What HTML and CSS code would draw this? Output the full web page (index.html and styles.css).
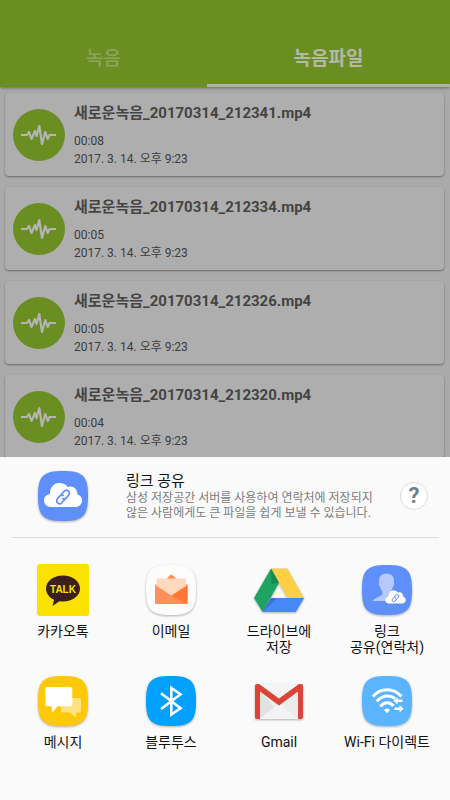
FILE: index.html
```html
<!DOCTYPE html>
<html lang="ko">
<head>
  <meta charset="UTF-8">
  <meta name="viewport" content="width=device-width, initial-scale=1">
  <title>녹음파일</title>
  <link rel="stylesheet" href="styles.css">
</head>
<body>

<!-- shared shapes -->
<svg class="defs" aria-hidden="true">
  <symbol id="wave" viewBox="0 0 52 52">
    <path d="M8 26H14L16 23L18.500 30L22 22L23.500 27L26.300 17L29 35L32.300 23L34.700 30L36.500 26H43" fill="none" stroke="#b4b4b4" stroke-width="2.200" stroke-linejoin="round"/>
  </symbol>
  <symbol id="tile" viewBox="0 0 50 50">
    <path d="M25 0C45 0 50 5 50 25C50 45 45 50 25 50C5 50 0 45 0 25C0 5 5 0 25 0Z"/>
  </symbol>
  <symbol id="cloud" viewBox="0 0 50 50">
    <path d="M13 36C8.500 36 6 33 6 29.500C6 26 8.500 23.500 12 23C12 16 16 12 21 12C25 12 28 13 29.500 16C35 14 39.500 18 39.500 23.500C42 24 44 26.500 44 29.500C44 33.500 41 36 37 36Z" fill="#fff"/>
    <g transform="translate(25 26) rotate(-48)" fill="none" stroke="#5e8ffb" stroke-width="1.700" stroke-linecap="round">
      <path d="M-1 3H-5A3 3 0 0 1 -5 -3H-1.500A3 3 0 0 1 1.300 -1"/>
      <path d="M1 -3H5A3 3 0 0 1 5 3H1.500A3 3 0 0 1 -1.300 1"/>
    </g>
  </symbol>
</svg>

<header class="tabs">
  <button class="tab">녹음</button>
  <button class="tab active">녹음파일</button>
</header>

<main>
  <ul class="records">
    <li class="record">
      <svg class="record-icon"><use href="#wave"/></svg>
      <div>
        <h2>새로운녹음_20170314_212341.mp4</h2>
        <p>00:08</p>
        <p>2017. 3. 14. 오후 9:23</p>
      </div>
    </li>
    <li class="record">
      <svg class="record-icon"><use href="#wave"/></svg>
      <div>
        <h2>새로운녹음_20170314_212334.mp4</h2>
        <p>00:05</p>
        <p>2017. 3. 14. 오후 9:23</p>
      </div>
    </li>
    <li class="record">
      <svg class="record-icon"><use href="#wave"/></svg>
      <div>
        <h2>새로운녹음_20170314_212326.mp4</h2>
        <p>00:05</p>
        <p>2017. 3. 14. 오후 9:23</p>
      </div>
    </li>
    <li class="record">
      <svg class="record-icon"><use href="#wave"/></svg>
      <div>
        <h2>새로운녹음_20170314_212320.mp4</h2>
        <p>00:04</p>
        <p>2017. 3. 14. 오후 9:23</p>
      </div>
    </li>
  </ul>
</main>

<section class="sheet">
  <div class="link-share">
    <svg class="icon shadow" viewBox="0 0 50 50">
      <use href="#tile" fill="#5e8ffb"/>
      <use href="#cloud"/>
    </svg>
    <div class="link-text">
      <h3>링크 공유</h3>
      <p>삼성 저장공간 서버를 사용하여 연락처에 저장되지<br>않은 사람에게도 큰 파일을 쉽게 보낼 수 있습니다.</p>
    </div>
    <button class="help">?</button>
  </div>

  <div class="apps">
    <button class="app">
      <span class="slot">
        <svg class="icon icon-square" viewBox="0 0 52 52">
          <rect width="52" height="52" rx="3" fill="#fae100"/>
          <path d="M26 11.500C35.500 11.500 43 17.200 43 24.600C43 32 35.500 37.500 26 37.500L22.500 37.300L15.500 42L17 35.800C12 33.500 9 29.500 9 24.600C9 17.200 16.500 11.500 26 11.500Z" fill="#3b1e1e"/>
          <text class="talk" x="26" y="28.500" text-anchor="middle">TALK</text>
        </svg>
      </span>
      <span class="app-name">카카오톡</span>
    </button>

    <button class="app">
      <span class="slot">
        <svg class="icon shadow" viewBox="0 0 50 50">
          <use href="#tile" fill="#fcfcfc"/>
          <path d="M20 14.500L24 10.300Q25.300 9 26.600 10.300L31 14.500Z" fill="#ff8a50"/>
          <path d="M9 20L12 18.500H39L41.500 20V38Q41.500 39 40.500 39H10Q9 39 9 38Z" fill="#ff8f5c"/>
          <path d="M41.500 20L25.300 30.500L40.500 39Q41.500 39 41.500 38Z" fill="#ff7733"/>
          <path d="M10.500 14.500Q10.500 13.500 11.500 13.500H39Q40 13.500 40 14.500V21L25.300 30.500L10.500 21Z" fill="#ffd9bd"/>
        </svg>
      </span>
      <span class="app-name">이메일</span>
    </button>

    <button class="app">
      <span class="slot">
        <svg class="icon shadow" viewBox="0 0 50 50">
          <path d="M17 3.500H33.300L50 33H33.700Z" fill="#ffcf48"/>
          <path d="M17 3.500L25 17.800L8.700 47L0 33Z" fill="#1da362"/>
          <path d="M17 33H50L41.800 47H8.700Z" fill="#4688f4"/>
          <path d="M17 3.500L25 17.800L17.500 19Z" fill="#178a52"/>
          <path d="M17 33L8.700 47L23 33Z" fill="#3a70d8"/>
        </svg>
      </span>
      <span class="app-name">드라이브에<br>저장</span>
    </button>

    <button class="app">
      <span class="slot">
        <svg class="icon shadow" viewBox="0 0 50 50">
          <use href="#tile" fill="#5e8ffb"/>
          <path d="M24.500 8.500C30 8.500 32.500 12 32 17.500C32.500 20 31.500 21.500 31 22C30 25 28.500 26 28.500 28C28.500 31 34 32 37 36H10.500C13 32 20.500 31.500 20.500 28C20.500 26 19 25 18 22C17 20.500 16.500 19 17 17.500C16.500 12 19 8.500 24.500 8.500Z" fill="#b5c9fb"/>
          <use href="#cloud" x="20" y="19" width="27" height="27"/>
        </svg>
      </span>
      <span class="app-name">링크<br>공유(연락처)</span>
    </button>

    <button class="app">
      <span class="slot">
        <svg class="icon shadow" viewBox="0 0 50 50">
          <use href="#tile" fill="#ffc907"/>
          <path d="M25 22H41.500Q43 22 43 23.500V35Q43 36.500 41.500 36.500H38.500L37 41.500L32.500 36.500H24.500Q23 36.500 23 35V22Z" fill="#ffe381"/>
          <path d="M9 11H32.500Q34.300 11 34.300 12.800V28.500Q34.300 30.300 32.500 30.300H19.500L14.500 36.500L13.500 30.300H9Q7.300 30.300 7.300 28.500V12.800Q7.300 11 9 11Z" fill="#fff"/>
        </svg>
      </span>
      <span class="app-name">메시지</span>
    </button>

    <button class="app">
      <span class="slot">
        <svg class="icon shadow" viewBox="0 0 50 50">
          <use href="#tile" fill="#02a0ff"/>
          <path d="M15 17.300L34.500 32.200L25.300 38.500V12L34.500 18.300L15 33" fill="none" stroke="#fff" stroke-width="2.600"/>
        </svg>
      </span>
      <span class="app-name">블루투스</span>
    </button>

    <button class="app">
      <span class="slot">
        <svg class="icon shadow" viewBox="0 0 50 50">
          <rect x="1" y="8" width="48" height="35" rx="2" fill="#ececec"/>
          <path d="M6 15L30 43H6Z" fill="#e2e2e2"/>
          <path d="M6 43L25 27L44 43Z" fill="#f3f3f3"/>
          <path d="M5 8H45L25 22.500Z" fill="#f4f4f4"/>
          <path d="M1 10Q1 8 3 8H5L25 22.500L45 8H47Q49 8 49 10V41Q49 43 47 43H44V15.500L25 29.500L6 15.500V43H3Q1 43 1 41Z" fill="#db4437"/>
        </svg>
      </span>
      <span class="app-name">Gmail</span>
    </button>

    <button class="app">
      <span class="slot">
        <svg class="icon shadow" viewBox="0 0 50 50">
          <use href="#tile" fill="#5ab4ff"/>
          <g fill="none" stroke="#fff" stroke-width="3">
            <path d="M11 20.500C18.500 11.500 31.500 11.500 39.500 20.500"/>
            <path d="M14.800 25.500C20 19 28 18.500 33 22.500"/>
            <path d="M18.500 30.500C22 25.500 28 25.500 31.500 30"/>
          </g>
          <path d="M22 34Q25 31 28 34L25 37.300Z" fill="#fff"/>
          <path d="M31.500 24.800L35.500 21V23.500H40.500V26H35.500V28.500Z" fill="#fff"/>
          <path d="M41.500 32.800L37.500 29V31.500H32.500V34H37.500V36.500Z" fill="#fff"/>
        </svg>
      </span>
      <span class="app-name">Wi-Fi 다이렉트</span>
    </button>
  </div>
</section>

</body>
</html>
```

FILE: styles.css
```css
* {
  margin: 0;
  padding: 0;
  box-sizing: border-box;
}

body {
  font-family: Roboto, "Noto Sans CJK KR", sans-serif;
  background: #aaaaaa;
  color: #444;
}

button {
  border: none;
  background: none;
  font-family: inherit;
  color: inherit;
  cursor: pointer;
}

.defs {
  position: absolute;
  width: 0;
  height: 0;
}

/* tabs */
.tabs {
  display: grid;
  grid-template-columns: 46fr 54fr;
  height: 87px;
  background: #6b8e23;
  box-shadow: 0 1px 3px rgba(0, 0, 0, 0.4);
}

.tab {
  padding-top: 28px;
  border-bottom: 3px solid transparent;
  font-size: 19px;
  font-weight: 500;
  color: #8fa45c;
}

.tab.active {
  color: #b4b9a8;
  font-weight: 700;
  border-bottom-color: #b0b2aa;
}

/* recordings */
.records {
  display: flex;
  flex-direction: column;
  gap: 11px;
  padding: 6px 6px 6px 5px;
  list-style: none;
}

.record {
  display: flex;
  align-items: center;
  gap: 9px;
  padding: 8px;
  background: #aeaeae;
  border-radius: 4px;
  box-shadow: 0 1px 2px rgba(0, 0, 0, 0.4);
}

.record-icon {
  flex: none;
  width: 52px;
  height: 52px;
  border-radius: 50%;
  background: #6b8e23;
}

.record h2 {
  margin-bottom: 7px;
  font-size: 15px;
  line-height: 24px;
  font-weight: 700;
}

.record p {
  font-size: 12px;
  line-height: 18px;
  color: #3c3c3c;
}

/* share sheet */
.sheet {
  position: fixed;
  left: 0;
  right: 0;
  bottom: 0;
  background: #fafafa;
  color: #111;
}

.link-share {
  display: flex;
  align-items: center;
  margin: 0 11px;
  padding: 14px 11px 16px 27px;
  border-bottom: 1px solid #dedede;
}

.icon {
  display: block;
  flex: none;
  width: 50px;
  height: 50px;
}

.icon-square {
  width: 52px;
  height: 52px;
}

.shadow {
  filter: drop-shadow(0 1px 1px rgba(0, 0, 0, 0.3));
}

.link-text {
  flex: 1;
  margin-left: 38px;
}

.link-text h3 {
  font-size: 15px;
  line-height: 20px;
  font-weight: 400;
}

.link-text p {
  font-size: 12px;
  line-height: 15px;
  color: #7c7c7c;
}

.help {
  flex: none;
  width: 28px;
  height: 28px;
  border: 1px solid #dcdcdc;
  border-radius: 50%;
  background: #fff;
  font-size: 22px;
  line-height: 26px;
  font-weight: 700;
  color: #6e7f86;
}

.apps {
  display: grid;
  grid-template-columns: repeat(4, 1fr);
  row-gap: 20px;
  padding: 26px 9px 50px;
}

.app {
  display: flex;
  flex-direction: column;
  align-items: center;
  gap: 7px;
}

.slot {
  display: flex;
  align-items: center;
  height: 52px;
}

.app-name {
  font-size: 14px;
  line-height: 16px;
}

.talk {
  font-family: "Liberation Sans", Arial, sans-serif;
  font-size: 10px;
  font-weight: 700;
  fill: #fae100;
}
```
